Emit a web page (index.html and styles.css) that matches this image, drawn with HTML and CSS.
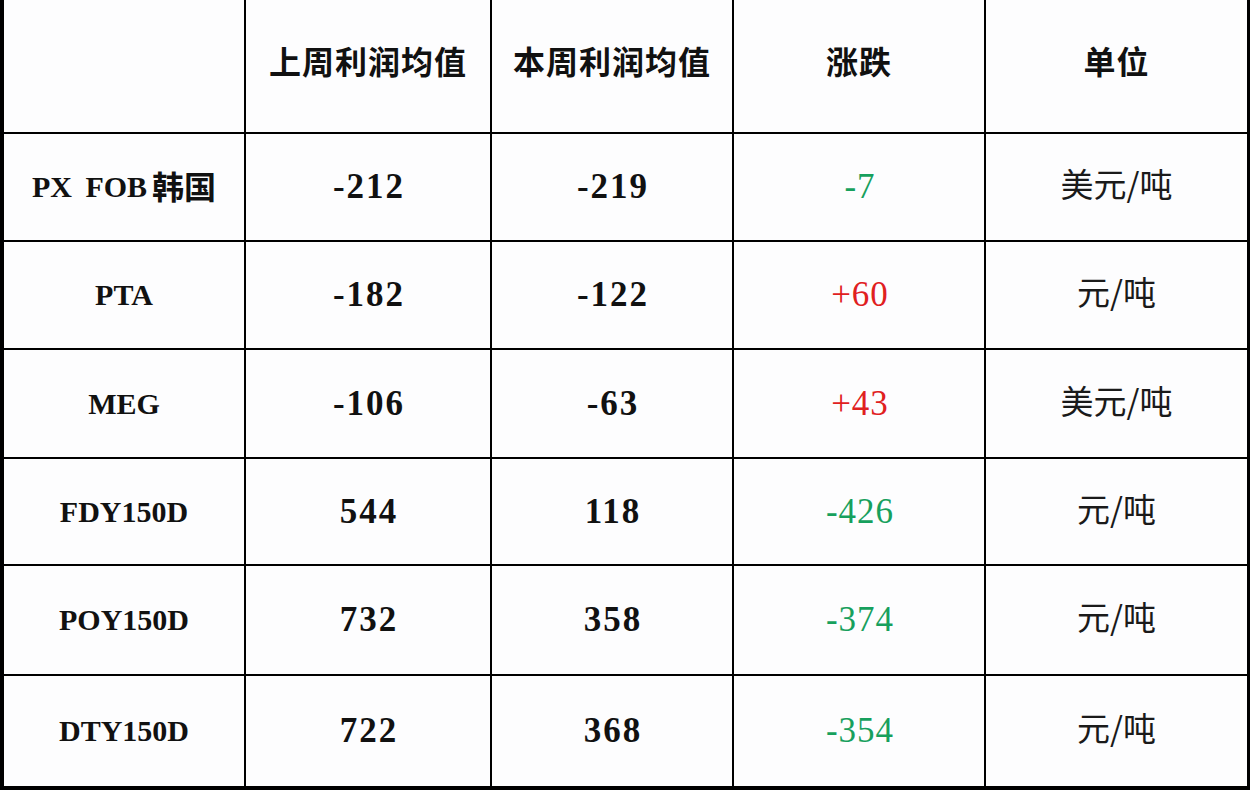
FILE: index.html
```html
<!DOCTYPE html>
<html lang="zh">
<head>
<meta charset="utf-8">
<link rel="stylesheet" href="styles.css">
</head>
<body>
<div class="table">
  <div class="cell head"></div>
  <div class="cell head">上周利润均值</div>
  <div class="cell head">本周利润均值</div>
  <div class="cell head">涨跌</div>
  <div class="cell head">单位</div>

  <div class="cell name">PX FOB<span class="cjk">韩国</span></div>
  <div class="cell num">-212</div>
  <div class="cell num">-219</div>
  <div class="cell num down">-7</div>
  <div class="cell unit">美元/吨</div>

  <div class="cell name">PTA</div>
  <div class="cell num">-182</div>
  <div class="cell num">-122</div>
  <div class="cell num up">+60</div>
  <div class="cell unit">元/吨</div>

  <div class="cell name">MEG</div>
  <div class="cell num">-106</div>
  <div class="cell num">-63</div>
  <div class="cell num up">+43</div>
  <div class="cell unit">美元/吨</div>

  <div class="cell name">FDY150D</div>
  <div class="cell num">544</div>
  <div class="cell num">118</div>
  <div class="cell num down">-426</div>
  <div class="cell unit">元/吨</div>

  <div class="cell name">POY150D</div>
  <div class="cell num">732</div>
  <div class="cell num">358</div>
  <div class="cell num down">-374</div>
  <div class="cell unit">元/吨</div>

  <div class="cell name">DTY150D</div>
  <div class="cell num">722</div>
  <div class="cell num">368</div>
  <div class="cell num down">-354</div>
  <div class="cell unit">元/吨</div>
</div>
</body>
</html>
```

FILE: styles.css
```css
html, body {
  margin: 0;
  padding: 0;
  background: #ffffff;
}

.table {
  width: 1250px;
  box-sizing: border-box;
  display: grid;
  grid-template-columns: 240px 244px 240px 250px 261px;
  grid-template-rows: 132px 106px 106px 107px 105px 108px 110px;
  gap: 2px;
  background: #000000;
  border-left: 4px solid #000000;
  border-right: 3px solid #000000;
  border-bottom: 4px solid #000000;
}

.cell {
  background: #fdfdfe;
  display: flex;
  align-items: center;
  justify-content: center;
  color: #111111;
  white-space: nowrap;
  box-sizing: border-box;
}

.head {
  font-family: "Noto Sans CJK SC", "Noto Sans", sans-serif;
  font-weight: 700;
  font-size: 32px;
  letter-spacing: 1px;
  padding-bottom: 12px;
}

.name {
  font-family: "Liberation Serif", "Noto Sans CJK SC", serif;
  font-weight: 700;
  font-size: 30px;
  letter-spacing: 0;
  word-spacing: 6px;
}

.name .cjk {
  font-family: "Noto Sans CJK SC", sans-serif;
  font-weight: 700;
  font-size: 32px;
  margin-left: 5px;
  position: relative;
  top: -2px;
}

.num {
  font-family: "Liberation Serif", serif;
  font-weight: 700;
  font-size: 35px;
  letter-spacing: 2px;
  padding-left: 2px;
}

.down {
  color: #17a05d;
  font-weight: 400;
  letter-spacing: 1px;
}

.up {
  color: #e0201e;
  font-weight: 400;
  letter-spacing: 1px;
}

.unit {
  font-family: "Noto Sans CJK SC", "Noto Sans", sans-serif;
  font-weight: 400;
  font-size: 33px;
  color: #1a1a1a;
  padding-bottom: 8px;
}
```
